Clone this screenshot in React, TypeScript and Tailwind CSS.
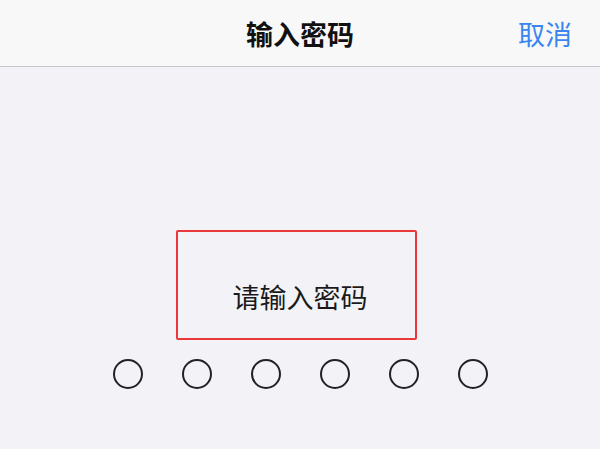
import React from "react";

const font = { fontFamily: '"Noto Sans CJK SC", "Noto Sans", sans-serif' };

export default function App() {
  const dots = [0, 1, 2, 3, 4, 5];

  return (
    <div className="w-[600px] h-[449px] bg-[#f2f2f7] overflow-hidden" style={font}>
      <header className="relative h-[67px] bg-[#f8f8f8] border-b border-[#c8c8cc] flex items-center justify-center">
        <h1 className="text-[27px] font-bold text-[#111] leading-none">输入密码</h1>
        <button className="absolute right-[28px] top-1/2 -translate-y-1/2 text-[27px] leading-none text-[#3a86f0]">
          取消
        </button>
      </header>

      <main className="flex flex-col items-center pt-[163px]">
        <div className="w-[241px] h-[110px] mr-[8px] border-2 border-[#e8383b] rounded-[2px] flex items-center justify-center pt-[22px]">
          <span className="text-[27px] leading-none text-[#1a1a1a] ml-[8px]">请输入密码</span>
        </div>

        <div className="flex gap-[39px] mt-[19px]">
          {dots.map((d) => (
            <span key={d} className="w-[30px] h-[30px] rounded-full border-2 border-[#222]" />
          ))}
        </div>
      </main>
    </div>
  );
}
